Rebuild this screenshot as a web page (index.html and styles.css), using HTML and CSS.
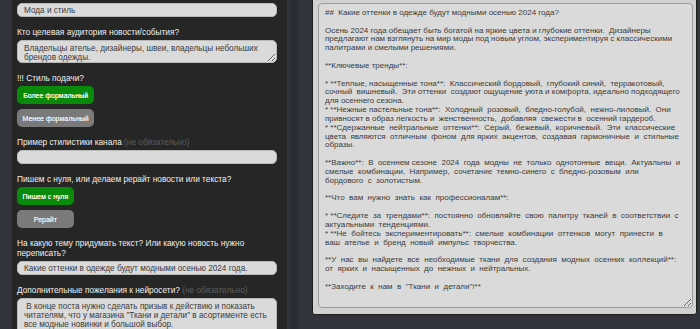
FILE: index.html
```html
<!DOCTYPE html>
<html lang="ru">
<head>
<meta charset="utf-8">
<title>Генератор постов</title>
<link rel="stylesheet" href="styles.css">
</head>
<body>
<div class="app">
  <section class="form">
    <div class="group first">
      <input class="field" type="text" value="Мода и стиль">
    </div>
    <div class="group">
      <label class="label">Кто целевая аудитория новости/события?</label>
      <textarea class="field area two">Владельцы ателье, дизайнеры, швеи, владельцы небольших брендов одежды.</textarea>
    </div>
    <div class="group">
      <label class="label">!!! Стиль подачи?</label>
      <div class="btns">
        <button class="btn on">Более формальный</button>
        <button class="btn">Менее формальный</button>
      </div>
    </div>
    <div class="group">
      <label class="label">Пример стилистики канала <span class="opt">(не обязательно)</span></label>
      <input class="field" type="text" value="">
    </div>
    <div class="group">
      <label class="label">Пишем с нуля, или делаем рерайт новости или текста?</label>
      <div class="btns">
        <button class="btn on">Пишем с нуля</button>
        <button class="btn">Рерайт</button>
      </div>
    </div>
    <div class="group">
      <label class="label">На какую тему придумать текст? Или какую новость нужно переписать?</label>
      <input class="field" type="text" value="Какие оттенки в одежде будут модными осенью 2024 года.">
    </div>
    <div class="group">
      <label class="label">Дополнительные пожелания к нейросети? <span class="opt">(не обязательно)</span></label>
      <textarea class="field area three"> В конце поста нужно сделать призыв к действию и показать читателям, что у магазина "Ткани и детали" в асортименте есть все модные новинки и большой выбор.</textarea>
    </div>
  </section>
  <div class="split"></div>
  <section class="result">
    <div class="result-label">Generated Post</div>
    <textarea class="post" wrap="off" readonly>##  Какие оттенки в одежде будут модными осенью 2024 года?

Осень 2024 года обещает быть богатой на яркие цвета и глубокие оттенки.  Дизайнеры
предлагают нам взглянуть на мир моды под новым углом, экспериментируя с классическими
палитрами и смелыми решениями.

**Ключевые тренды**:

* **Теплые, насыщенные тона**:  Классический бордовый,  глубокий синий,  терракотовый,
сочный  вишневый.  Эти оттенки  создают ощущение уюта и комфорта, идеально подходящего
для осеннего сезона.
* **Нежные пастельные тона**:  Холодный  розовый,  бледно-голубой,  нежно-лиловый.  Они
привносят в образ легкость и  женственность,  добавляя  свежести в  осенний гардероб.
* **Сдержанные  нейтральные  оттенки**:  Серый,  бежевый,  коричневый.  Эти  классические
цвета  являются  отличным  фоном  для ярких  акцентов,  создавая  гармоничные  и  стильные
образы.

**Важно**:  В  осеннем сезоне  2024  года  модны  не  только  однотонные  вещи.  Актуальны  и
смелые  комбинации.  Например,  сочетание  темно-синего  с  бледно-розовым  или
бордового  с  золотистым.

**Что  вам  нужно  знать  как  профессионалам**:

* **Следите  за  трендами**:  постоянно  обновляйте  свою  палитру  тканей  в  соответствии  с
актуальными  тенденциями.
* **Не  бойтесь  экспериментировать**:  смелые  комбинации  оттенков  могут  принести  в
ваш  ателье  и  бренд  новый  импульс  творчества.

**У  нас  вы  найдете  все  необходимые  ткани  для  создания  модных  осенних  коллекций**:
от  ярких  и  насыщенных  до  нежных  и  нейтральных.

**Заходите  к  нам  в  "Ткани  и  детали"!**</textarea>
  </section>
</div>
</body>
</html>
```
FILE: styles.css
```css
html, body {
  margin: 0;
  padding: 0;
  height: 100%;
  overflow: hidden;
}

body {
  background: #31353b;
  font-family: "Liberation Sans", Arial, sans-serif;
}

.app {
  display: flex;
  align-items: flex-start;
  padding-left: 12px;
  height: 329px;
}

.form {
  width: 275px;
  box-sizing: border-box;
  align-self: stretch;
  background: #262626;
  padding: 3px 10px 0 5px;
  display: flex;
  flex-direction: column;
  gap: 10px;
}

.group {
  display: flex;
  flex-direction: column;
  align-items: stretch;
}

.label {
  display: block;
  color: #f0f0f0;
  font-size: 8.3px;
  line-height: 10px;
  margin-bottom: 3px;
}

.opt {
  color: #5d5d5d;
}

.field {
  display: block;
  box-sizing: border-box;
  width: 100%;
  margin: 0;
  height: 14px;
  padding: 0 6px;
  border: 1px solid #b9b9b9;
  border-radius: 5px;
  background: #dadada;
  color: #3b3b3b;
  font-family: "Liberation Sans", Arial, sans-serif;
  font-size: 8.2px;
  outline: none;
}

.area {
  resize: vertical;
  padding: 3px 6px;
  line-height: 9px;
  overflow: hidden;
}

.area.two {
  height: 23px;
}

.area.three {
  height: 40px;
}

.btns {
  display: flex;
  flex-direction: column;
  align-self: flex-start;
  gap: 5px;
}

.btn {
  height: 18px;
  padding: 0 5.5px;
  border: none;
  border-radius: 5px;
  background: #7a7a7a;
  color: #ececec;
  font-family: "Liberation Sans", Arial, sans-serif;
  font-size: 7px;
  text-align: center;
  text-shadow: 0 0 0.2px currentColor;
}

.btn.on {
  background: #0a8a0a;
  color: #f4f4f4;
}

.split {
  width: 8px;
  margin-left: 3px;
  align-self: stretch;
  background: #2a2d33;
}

.result {
  margin-top: -12px;
  margin-left: 14px;
  width: 385px;
  box-sizing: border-box;
  background: #d1d1d1;
  border: 1px solid #1d1d1d;
  border-radius: 3px;
  padding: 2px 3px 6px 5px;
  display: flex;
  flex-direction: column;
}

.result-label {
  font-size: 9px;
  font-weight: bold;
  line-height: 10px;
  color: #262626;
  margin-bottom: 2px;
  padding-left: 2px;
}

.post {
  display: block;
  box-sizing: border-box;
  width: 100%;
  height: 305px;
  margin: 0;
  padding: 5px 6px;
  border: 1px solid #9d9d9d;
  border-radius: 4px;
  background: #dadada;
  color: #3a3a3a;
  font-family: "Liberation Sans", Arial, sans-serif;
  font-size: 8px;
  line-height: 8.83px;
  white-space: pre;
  overflow: hidden;
  resize: vertical;
  outline: none;
}
```
